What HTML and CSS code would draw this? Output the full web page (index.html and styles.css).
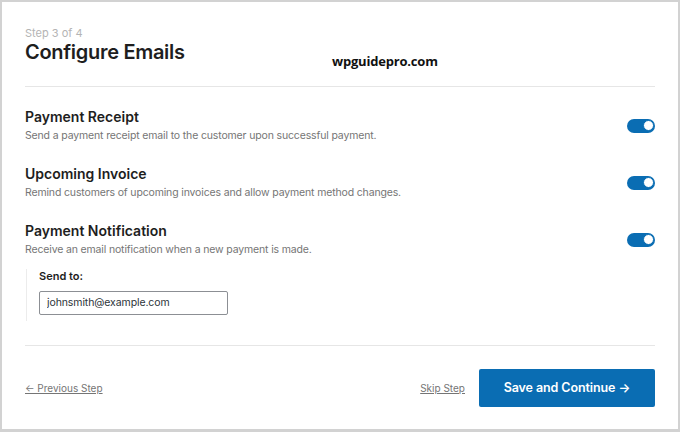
FILE: index.html
```html
<!DOCTYPE html>
<html lang="en">
<head>
  <meta charset="UTF-8" />
  <title>Configure Emails</title>
  <link rel="stylesheet" href="styles.css">
</head>
<body>
  <div class="frame">
    <div class="header">
      <div class="step">Step 3 of 4</div>
      <h1>Configure Emails</h1>
      <span class="watermark">wpguidepro.com</span>
    </div>

    <div class="options">
      <div class="option">
        <div class="option-text">
          <h2>Payment Receipt</h2>
          <p>Send a payment receipt email to the customer upon successful payment.</p>
        </div>
        <span class="toggle on"><span class="knob"></span></span>
      </div>

      <div class="option">
        <div class="option-text">
          <h2>Upcoming Invoice</h2>
          <p>Remind customers of upcoming invoices and allow payment method changes.</p>
        </div>
        <span class="toggle on"><span class="knob"></span></span>
      </div>

      <div class="option option-last">
        <div class="option-text">
          <h2>Payment Notification</h2>
          <p>Receive an email notification when a new payment is made.</p>
        </div>
        <span class="toggle on"><span class="knob"></span></span>
      </div>

      <div class="send-to">
        <label for="email">Send to:</label>
        <input type="text" id="email" value="johnsmith@example.com" />
      </div>
    </div>

    <div class="footer">
      <a href="#" class="link">&larr; Previous Step</a>
      <div class="actions">
        <a href="#" class="link">Skip Step</a>
        <button>Save and Continue &rarr;</button>
      </div>
    </div>
  </div>
</body>
</html>
```

FILE: styles.css
```css
body {
  margin: 0;
  font-family: Inter, "Noto Sans", Arial, sans-serif;
  background: #fff;
  color: #1e1e1e;
}

.frame {
  width: 680px;
  height: 432px;
  box-sizing: border-box;
  border: 2px solid #d2d2d2;
  border-bottom-width: 3px;
  padding: 23px 23px 0 23px;
}

.header {
  position: relative;
  padding-bottom: 21px;
  border-bottom: 1px solid #e6e6e6;
}

.step {
  font-size: 11px;
  line-height: 14px;
  color: #b4b4b4;
  padding-top: 1px;
}

h1 {
  margin: 0;
  font-size: 20px;
  line-height: 25px;
  font-weight: 600;
  letter-spacing: -0.3px;
}

.watermark {
  position: absolute;
  left: 307px;
  top: 27px;
  font-family: "Open Sans", "DejaVu Sans", sans-serif;
  font-weight: bold;
  font-size: 13px;
  letter-spacing: -0.2px;
  color: #111;
}

.options {
  padding-top: 20px;
  padding-bottom: 24px;
  border-bottom: 1px solid #e6e6e6;
}

.option {
  display: flex;
  align-items: center;
  justify-content: space-between;
  margin-bottom: 20px;
}

.option-last {
  margin-bottom: 11px;
}

h2 {
  margin: 0;
  font-size: 14px;
  line-height: 20px;
  font-weight: 600;
}

.option-text p {
  margin: 1px 0 0;
  font-size: 10.5px;
  line-height: 16px;
  letter-spacing: -0.15px;
  color: #757575;
}

.toggle {
  width: 28px;
  height: 14px;
  border-radius: 7px;
  background: #0a6db3;
  display: flex;
  justify-content: flex-end;
  align-items: center;
  padding: 0 1px;
  box-sizing: border-box;
}

.knob {
  width: 11px;
  height: 11px;
  border-radius: 50%;
  background: #fff;
  border: 1px solid #0a6db3;
  box-sizing: border-box;
}

.send-to {
  border-left: 1px solid #ececec;
  padding: 0 0 6px 12px;
  margin-left: 1px;
}

.send-to label {
  display: block;
  font-size: 11px;
  line-height: 14px;
  font-weight: 600;
  margin-bottom: 7px;
}

.send-to input {
  width: 189px;
  height: 24px;
  box-sizing: border-box;
  border: 1px solid #8c8f94;
  border-radius: 2px;
  padding: 0 7px;
  font-family: inherit;
  font-size: 10.5px;
  letter-spacing: -0.1px;
  color: #2c3338;
}

.footer {
  display: flex;
  align-items: center;
  justify-content: space-between;
  padding-top: 23px;
}

.link {
  font-size: 10px;
  color: #757575;
  text-decoration: underline;
}

.actions {
  display: flex;
  align-items: center;
  gap: 14px;
}

button {
  width: 176px;
  height: 38px;
  background: #0a6db3;
  color: #fff;
  border: none;
  border-radius: 2px;
  font-family: inherit;
  font-size: 12.5px;
  font-weight: 600;
  letter-spacing: -0.1px;
  cursor: pointer;
}
```
